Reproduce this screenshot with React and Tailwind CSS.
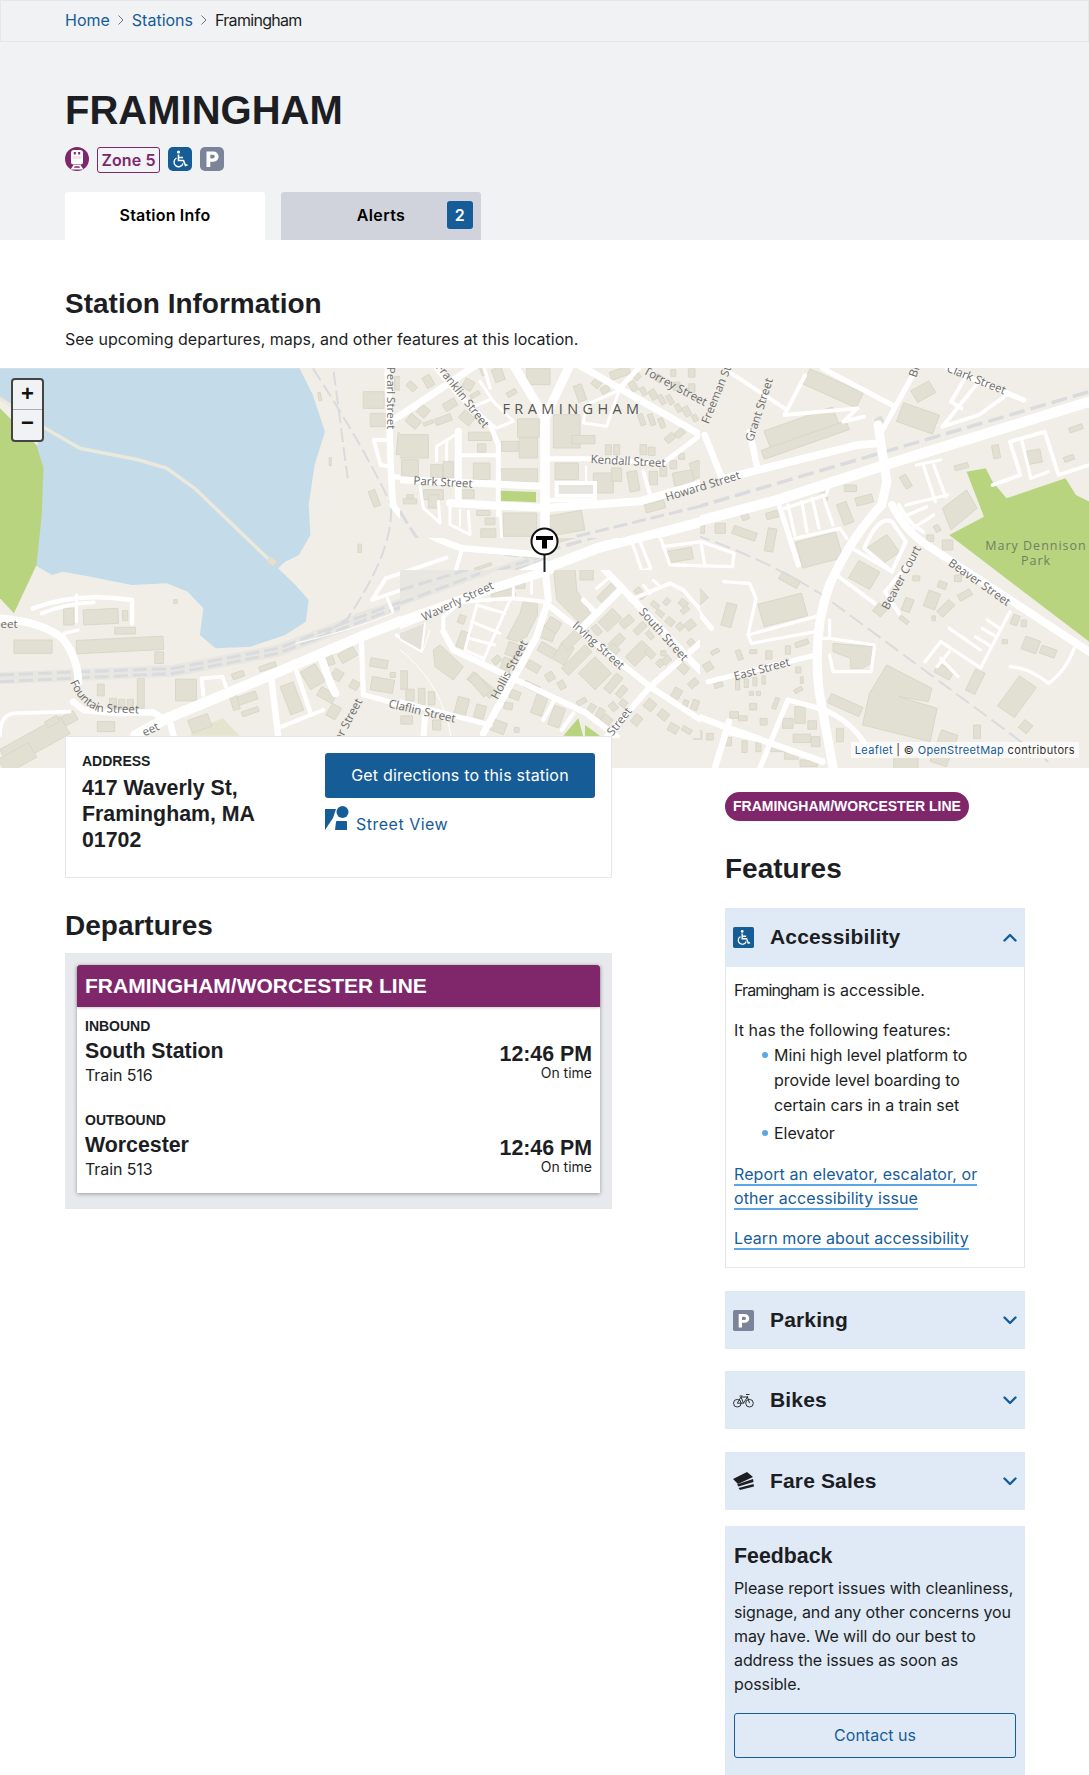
import React from "react";

const INTER = "font-['Inter',sans-serif]";
const ARIAL = "font-['Liberation_Sans',Arial,sans-serif]";

const water2 = "M0 10 L862 10 L900 90 L935 200 L905 300 L888 420 L893 510 L860 570 L820 590 L800 610 L850 660 L888 705 L880 770 L820 810 L720 845 L620 850 L575 810 L585 730 L540 680 L480 655 L380 660 L260 635 L180 620 L150 630 L100 600 L108 450 L105 250 L120 190 L0 100 Z";
const green2 = ["M0 130 L105 240 L125 310 L120 450 L105 600 L40 745 L0 700 Z"];
const green3 = ["M1215 320 L1270 310 L1290 350 L1330 400 L1500 340 L1530 390 L1568 410 L1568 830 L1165 510 L1265 455 Z"];

const b2 = [[1075,105,60,50,0],[1090,165,50,40,0],[1190,240,95,65,5],[1180,310,45,50,0],[1385,320,50,50,0],[1490,190,60,80,0],[1510,280,90,130,0],[1465,250,50,30,0],[1260,320,30,50,0],[1290,310,30,50,0],[1385,250,20,25,0],[1185,170,40,30,30],[1220,140,30,20,50],[1270,160,50,25,-20],[1150,55,30,40,0],[1185,90,30,15,-30],[1230,50,20,40,-20],[1300,120,35,30,40],[1330,165,25,30,40],[1360,215,60,25,0],[1380,90,30,15,0],[1250,385,50,30,0],[1345,385,50,20,0],[1180,385,40,25,10],[1410,445,40,20,0],[1410,468,30,15,0],[1410,500,45,30,0],[1495,480,90,70,0],[1077,400,20,50,-20],[1035,550,10,25,0],[950,290,6,25,0],[782,590,25,20,40],[198,755,30,50,0],[290,755,100,45,-3],[360,752,15,30,0],[360,797,60,20,0],[345,840,250,40,-3],[95,845,110,40,0],[458,878,25,35,0],[405,985,20,90,0],[290,975,20,35,0],[325,1015,20,30,0],[350,1018,18,30,0],[375,1018,18,30,0],[535,975,60,65,0],[685,930,35,18,-20],[770,905,50,15,-20],[100,1130,200,60,-30],[150,1070,40,20,-30],[200,1060,40,30,-30],[50,1180,100,50,-30],[305,1085,50,30,0],[710,1000,60,25,-20],[720,1040,50,15,-20],[675,1010,20,50,-15],[575,1075,60,40,-20],[900,935,50,60,-30],[840,1000,40,90,-20],[950,885,20,30,-20],[1000,870,50,30,-30],[970,930,30,30,30],[940,990,50,30,30],[1020,960,25,25,30],[960,1040,30,40,30],[1090,895,50,25,10],[1100,960,65,40,10],[1130,930,15,15,0],[1160,945,15,45,0],[1045,745,50,8,-20],[1390,605,50,8,-20],[1425,630,70,14,-20],[1180,720,50,8,-20],[975,800,50,8,-20],[505,710,10,12,0],[920,95,8,25,-10]];

const b3 = [[60,500,110,50,-15],[1090,80,60,40,-30],[830,70,170,50,25],[740,190,210,60,-20],[750,225,260,28,-20],[965,170,20,25,-30],[1075,160,110,60,20],[880,370,35,20,0],[920,405,50,25,-15],[865,445,30,65,-20],[805,395,15,25,-15],[575,450,20,30,-20],[505,490,30,30,0],[445,490,30,30,0],[575,505,70,25,20],[650,525,25,70,10],[655,450,35,20,-15],[1300,260,20,40,-10],[1200,305,40,15,-15],[1410,275,40,40,-10],[1530,190,40,15,-20],[1510,280,30,15,-20],[1040,350,20,40,-30],[1130,490,15,20,-30],[1110,520,20,20,0],[1160,540,30,30,0],[390,570,70,35,-10],[975,555,70,65,-35],[920,630,70,60,30],[790,555,120,80,-15],[685,735,130,70,-15],[705,645,60,25,30],[530,750,30,70,15],[440,685,60,30,50],[1155,730,50,25,-45],[1115,705,35,50,20],[1045,720,25,40,20],[1210,690,40,20,-30],[1145,660,25,20,20],[1190,640,20,20,0],[1070,640,20,15,0],[965,735,30,30,40],[1035,765,30,12,40],[1120,760,10,15,0],[1325,830,15,12,0],[1400,840,45,40,20],[1450,860,45,25,20],[1355,765,20,30,20],[1380,775,15,20,0],[1240,950,30,70,25],[1360,995,60,110,35],[1385,1085,30,30,40],[1245,1100,20,40,0],[1150,920,50,30,30],[865,1020,100,30,25],[1150,1150,50,100,20],[1040,1195,70,40,0],[560,870,15,30,-20],[600,860,20,12,0],[645,870,18,25,0],[700,855,15,25,0],[740,835,40,15,-20],[555,960,12,30,0],[580,955,12,25,0],[605,950,12,25,0],[630,945,10,25,0],[490,860,25,12,-30],[470,905,25,25,-30],[500,960,25,15,-20],[730,915,15,18,0],[740,945,8,20,0],[730,975,25,12,-30],[595,985,12,12,0],[615,985,12,12,0],[665,1015,12,35,20],[545,1050,25,20,0],[570,1060,25,15,0],[600,1025,20,20,0],[630,1070,20,20,0],[700,1075,30,30,0],[735,1050,30,50,0],[770,1080,25,25,0],[740,1120,50,25,0],[780,1130,25,30,0],[670,1150,40,20,0],[710,1170,40,25,0],[760,1195,50,20,0],[850,1110,20,40,0],[525,1130,25,25,0],[575,1145,15,35,0],[615,1145,15,30,0],[440,1110,25,25,0],[475,1115,20,20,0]];

const poly3 = ["M1145 430 L1215 375 L1245 430 L1170 495 Z","M985 900 L1115 970 L1105 1010 L1020 995 L1130 1030 L1110 1130 L915 1080 L935 985 Z","M830 835 L945 845 L940 895 L915 910 L880 910 L880 880 L830 860 Z"];

const rail2 = ["M0 930 L500 910 L800 850 L1100 730 L1568 570","M0 950 L500 925 L800 865 L1100 745 L1568 585","M900 10 Q1050 250 1130 430 Q1220 560 1568 580","M1125 430 Q1130 560 1000 760 L900 830","M960 20 L1000 340"];
const rail3 = [["M0 560 L1568 80",3.5],["M370 490 Q600 560 800 690 L1450 1190",2]];

const roads2 = [
[8,"M390 1110 L480 1060 L780 930 L1050 810 L1568 600"],[6,"M0 760 Q120 770 180 820 Q225 880 225 950"],[5,"M210 1010 L240 1035 L340 1045 L440 1042 L490 1075 L500 1115"],[5,"M1115 10 L1125 330 L1130 420 Q1180 500 1330 550 L1568 570"],[4,"M1125 335 L1420 358"],[5,"M1340 20 L1130 165"],[3,"M1125 225 L1075 225 L1095 300 L1125 305"],[3,"M1285 578 L1110 640 L1070 705 L1310 620 L1330 550"],[2.5,"M1195 620 L1205 645"],[2.5,"M1115 700 L1130 740"],[3.5,"M95 730 Q220 680 380 705 L380 775"],[3,"M120 745 Q190 715 270 712"],[2.5,"M220 690 L220 770"],[2.5,"M185 805 L225 795"],[3,"M650 965 L640 935 L580 940 L585 990"],[5,"M780 935 L800 1110"],[3.5,"M850 910 L895 1050"],[3,"M810 1085 L930 1035"],[6,"M925 880 Q950 960 965 985"],[4,"M1040 830 L1045 990"],[4,"M1050 990 L1220 1040"],[3,"M0 1110 Q0 1050 40 1045 L200 1040"],[1,"M850 835 Q1000 800 1130 745"],[2.5,"M1140 810 L1190 850 L1225 790"]
];

const roads3 = [
[8,"M0 610 L150 550 L670 405 L980 300 L1568 110"],[6,"M520 340 L900 240 L960 235"],[7,"M960 180 L985 350 L970 420 Q880 520 820 660 Q770 800 790 980 L830 1208"],[4,"M1060 30 L970 200"],[6,"M1000 420 Q1040 500 1100 540 L1568 860"],[4,"M480 790 L370 650 L340 670"],[4,"M470 950 L780 870"],[5,"M510 340 L460 210"],[3,"M530 20 L690 130"],[3,"M750 30 L690 150 L900 130 L860 170 L920 155"],[4,"M800 10 L1000 120"],[5,"M590 200 L610 300"],[4,"M1160 10 L1380 105"],[3,"M1210 40 L1170 110 L1200 130"],[3,"M1250 50 L1145 185"],[3,"M1330 90 L1250 150 L1145 185"],[3,"M1290 360 L1370 330 L1340 230 L1440 200 L1480 330 L1568 300"],[2.5,"M1375 230 L1400 340 L1450 320"],[2.5,"M1070 300 L1140 285"],[2.5,"M1090 300 L1125 410"],[2.5,"M1120 300 L1155 395"],[2.5,"M1040 420 L1160 390"],[2.5,"M1045 450 L1100 425"],[2.5,"M1060 490 L1120 450"],[3,"M1020 420 Q1050 480 1090 500"],[4,"M670 405 L730 600"],[2.5,"M690 430 L810 390"],[2.5,"M700 420 L720 510"],[2.5,"M740 410 L755 500"],[2.5,"M770 400 L790 490"],[2.5,"M800 390 L830 480"],[2.5,"M720 520 L850 490 L870 520"],[2.5,"M820 360 L810 390"],[3,"M1000 470 Q960 450 920 550 L1000 620 L1040 530 Z"],[3,"M885 550 L1000 620"],[3,"M840 630 L950 715"],[3,"M1060 580 L980 680 L1020 745"],[2.5,"M515 650 L590 655 L608 700 L585 810 L595 835 L780 800"],[2.5,"M585 810 L780 755"],[2.5,"M820 765 L820 820 L950 840 L940 920 L830 920 L820 870"],[2.5,"M780 820 L820 820"],[2.5,"M330 510 L360 600 L540 605 L545 565 L450 530 L340 545"],[2.5,"M450 535 L460 600"],[2.5,"M250 530 L280 620 L305 610 L270 520"],[2.5,"M1165 790 L1255 855"],[2.5,"M1140 830 L1250 905"],[2.5,"M1095 890 L1140 830"],[2.5,"M1130 905 L1165 860"],[2.5,"M1190 935 L1140 880"],[2.5,"M1255 910 L1340 740"],[2.5,"M1275 765 L1310 790"],[2.5,"M1260 790 L1300 815"],[2.5,"M1240 815 L1280 840"],[2.5,"M1340 905 Q1400 910 1450 955 Q1500 920 1525 850"],[4,"M620 1208 L700 1005 L790 1030 Q880 1060 930 1150"],[4,"M640 1130 L520 1100"],[5,"M300 1000 L530 1090 L800 1190"],[5,"M530 1070 L510 1140 L490 1208"]
];

const tB = [[40,235,90,70,0],[30,300,50,50,0],[110,310,35,40,0],[145,305,30,50,0],[245,240,25,25,0],[245,310,50,50,0],[240,205,70,25,0],[355,325,115,45,0],[330,235,50,30,0],[385,240,55,60,0],[385,180,65,55,0],[500,310,70,50,0],[610,345,60,60,0],[650,320,30,40,0],[700,340,30,60,-10],[760,330,25,40,0],[850,330,60,40,-10],[890,305,30,50,-20],[790,310,20,30,0],[820,290,20,25,0],[500,190,80,100,0],[550,215,70,25,0],[625,245,18,30,0],[650,245,18,30,0],[730,245,20,30,0],[755,250,20,25,0],[765,415,60,25,-15],[250,435,40,15,0],[270,460,30,20,0],[265,495,45,25,0],[360,470,100,70,0],[500,465,100,60,-10],[195,378,55,25,0],[100,380,60,30,0],[100,400,30,40,0],[30,400,40,15,0],[30,385,20,10,0],[35,55,20,30,-45],[40,160,40,30,40],[70,130,30,30,40],[85,40,25,35,-30],[130,155,50,20,-20],[85,165,30,10,-20],[205,50,30,30,30],[225,80,30,12,-30],[200,150,40,30,40],[150,110,40,25,-30],[250,10,15,25,-20],[415,25,70,50,0],[295,20,30,40,-20],[335,75,30,15,-30],[590,45,25,25,40],[615,65,25,20,-30],[540,75,25,50,-20],[660,15,60,25,-20],[700,55,20,30,-30],[730,70,15,25,-30],[760,80,20,30,-30],[785,95,15,30,-30],[810,95,15,30,-30],[835,120,15,25,-30],[860,130,20,30,-30],[885,150,15,20,-30],[725,155,15,35,-20],[755,155,15,35,-20],[785,165,15,30,-20],[810,210,30,20,-40],[840,195,30,20,-40],[845,265,18,18,0],[710,25,20,20,40],[775,30,20,20,40],[830,55,20,25,0],[875,60,20,25,0],[875,15,20,25,0],[820,15,15,20,0]];
const tR = [[9.5,"M435 520 L435 150"],[9,"M435 150 L340 -10"],[9,"M435 150 L510 -10"],[7,"M-10 150 L230 -10"],[5,"M100 -10 L175 80 L270 170 L295 230 L295 440"],[7,"M175 190 L175 400"],[3,"M110 280 L110 235 L175 195"],[3,"M140 220 L140 275"],[4,"M185 262 L290 262"],[7,"M-10 335 L435 355"],[8,"M150 405 L435 420 L720 400 L910 345"],[5,"M450 272 L570 272 L790 285 L910 195"],[3,"M60 355 L70 420 L120 465 L115 400"],[3,"M150 410 L150 470 L210 500 L205 430"],[2,"M180 425 L180 475"],[2.5,"M300 420 L305 510"],[3,"M240 40 L280 100 L340 160 L290 180 L210 120 L270 95"],[3.5,"M250 -10 L270 60"],[7,"M535 -10 L910 205"],[5,"M660 60 L725 -10"],[3,"M660 60 L620 175 L550 165 L560 110 L650 70"],[2,"M558 295 L558 345"],[4,"M450 397 L585 397"],[2.5,"M585 345 L585 400"],[4,"M730 310 L750 380"],[10,"M590 545 L910 460"]];

const bB = [[185,148,20,25,20],[190,210,30,50,20],[340,240,40,40,20],[290,270,25,20,-40],[320,285,30,40,20],[245,345,90,30,40],[240,345,30,70,-40],[345,375,30,25,20],[395,350,50,20,25],[295,470,45,35,20],[325,408,25,20,10],[350,480,15,15,0],[185,410,35,55,15],[240,425,30,40,15],[418,405,35,60,20],[470,440,35,60,20],[445,190,40,40,20],[460,165,40,35,30],[440,240,50,30,30],[490,250,40,60,30],[515,210,60,30,-45],[530,270,100,30,-45],[585,310,70,70,-45],[640,340,60,25,-50],[400,290,40,25,30],[450,320,25,25,-30],[485,345,20,25,-30],[630,150,60,40,-45],[680,155,40,25,-40],[590,180,20,30,-40],[650,215,50,25,-45],[640,240,30,30,-45],[715,250,70,40,-45],[750,250,20,30,-45],[780,280,20,20,-45],[720,175,40,20,-45],[750,195,15,25,-40],[790,250,15,15,0],[560,15,40,30,0],[620,70,60,25,-45],[720,70,35,20,50],[310,75,70,25,-15],[360,45,30,20,0],[765,105,25,15,40],[800,95,15,20,40],[850,100,25,20,40],[855,120,25,15,-40],[780,130,25,15,40],[810,155,25,20,40],[840,170,20,20,-40],[870,165,30,25,-40],[875,220,20,25,-40],[800,270,25,20,-40],[850,295,30,25,40],[880,340,30,20,-40],[830,370,25,30,30],[750,405,30,30,40],[790,435,30,25,40],[820,475,30,25,30],[860,480,30,15,30],[885,405,20,30,20],[855,405,15,30,20],[670,400,20,20,40],[640,410,20,25,-40],[665,365,35,20,-50],[600,430,20,30,30],[575,415,20,25,30],[545,395,30,15,-30],[620,450,30,25,40],[710,450,25,30,40],[10,330,25,55,0],[30,375,25,35,0],[65,380,20,50,0],[95,385,20,40,0],[110,465,25,30,0],[20,450,35,25,0]];
const bP = ["M100 240 L120 225 L190 290 L160 330 L105 290 Z","M370 95 L412 95 L412 135 L380 200 L350 215 L320 205 L360 130 Z","M460 -5 L525 -5 L530 60 L570 130 L540 160 L470 90 Z"];
const bR = [[9,"M-10 158 L280 55 L450 0"],[7,"M435 -5 L445 90 L410 200 L250 490"],[6,"M445 105 L750 350 L910 455"],[6,"M130 185 L160 240 L560 430 L650 500"],[4,"M130 185 L130 140 L180 95 L340 85 L435 95"],[3,"M230 105 L315 130"],[3,"M215 155 L300 190"],[3,"M207 205 L285 225"],[3,"M195 240 L250 265"],[3,"M330 90 L250 270"],[3,"M230 105 L195 240"],[7,"M610 -5 L880 280 L910 310"],[6,"M910 210 L750 350 L620 500"],[7,"M660 60 L550 170"],[5,"M550 90 L580 120"],[3,"M590 55 L625 25"],[3,"M730 45 L750 70"],[3,"M760 30 L780 50"],[4,"M690 90 L810 40 L850 60 L910 130"],[5,"M-10 393 L270 465"],[6,"M75 440 L70 510"],[3,"M395 35 L395 70"],[3,"M340 50 L340 85"],[4,"M460 395 L430 450"],[4,"M520 430 L485 480"],[1,"M-5 235 Q130 340 155 510"],[1,"M90 180 L70 240"],[2,"M-5 205 L65 245 L75 160"],[3,"M-5 175 L85 140"]];

const labels = [
["Pearl Street",390,30,90],["Franklin Street",462,28,52],["Kendall Street",628,94,3],["Park Street",443,115,3],["Howard Street",703,119,-17],["Torrey Street",675,19,28],["Freeman St",717,27,-68],["Grant Street",760,42,-72],["Bi",915,4,-70],["Clark Street",976,12,22],["Waverly Street",458,234,-25],["Irving Street",598,278,42],["South Street",663,267,48],["Hollis Street",510,302,-62],["Street",620,354,-52],["East Street",762,302,-15],["Beaver Court",902,210,-62],["Beaver Street",979,215,35],["Claflin Street",422,344,13],["eet",9,257,0],["ar Street",349,352,-62],["eet",151,362,-25]
];

const Bldg = ({ d }) => d.map(([x, y, w, h, a], i) => (
  <rect key={i} x={x - w / 2} y={y - h / 2} width={w} height={h} fill="#e2dfd3" stroke="#dad7ca" strokeWidth="1" vectorEffect="non-scaling-stroke" transform={`rotate(${a} ${x} ${y})`} />
));
const Rd = ({ d, k = 1.3 }) => d.map(([w, p], i) => (
  <path key={i} d={p} fill="none" stroke="#ffffff" strokeWidth={w * (w > 1 ? k : 1)} strokeLinecap="round" strokeLinejoin="round" vectorEffect="non-scaling-stroke" />
));

const MapArt = () => (
  <svg viewBox="0 0 1089 400" className="block w-full h-full" xmlns="http://www.w3.org/2000/svg">
    <defs>
      <clipPath id="clipTop"><rect x="400" y="0" width="300" height="170" /></clipPath>
      <clipPath id="clipBot"><rect x="400" y="202" width="300" height="168" /></clipPath>
    </defs>
    <rect width="1089" height="400" fill="#f0eee7" />
    <g transform="scale(0.3476 0.33333) translate(0 -9)">
      <path d={water2} fill="#c4dbe9" />
      <path d="M0 100 L130 190 L230 250 L400 285 L480 310 L560 370 L790 600" fill="none" stroke="#ebe8dc" strokeWidth="3.5" vectorEffect="non-scaling-stroke" />
      {green2.map((d, i) => <path key={i} d={d} fill="#b9d47e" />)}
      <path d="M550 1100 L640 1060 L690 1112 L550 1112 Z" fill="#e3e5cf" />
      <Bldg d={b2} />
      <path d="M0 940 L500 917 L800 857 L1100 737 L1568 577" fill="none" stroke="#e8e7e2" strokeWidth="12" vectorEffect="non-scaling-stroke" />
      {rail2.map((d, i) => <path key={i} d={d} fill="none" stroke="#d9dbde" strokeWidth={i < 2 ? 3 : 2} strokeDasharray="14 5" vectorEffect="non-scaling-stroke" />)}
      <Rd d={roads2} />
    </g>
    <g transform="translate(545 0) scale(0.347 0.33333) translate(0 -9)">
      {green3.map((d, i) => <path key={i} d={d} fill="#b9d47e" />)}
      {poly3.map((d, i) => <path key={i} d={d} fill="#e2dfd3" stroke="#dad7ca" vectorEffect="non-scaling-stroke" />)}
      <Bldg d={b3} />
      {rail3.map(([d, w], i) => <path key={i} d={d} fill="none" stroke="#d9dbde" strokeWidth={w} strokeDasharray="16 6" vectorEffect="non-scaling-stroke" />)}
      <Rd d={roads3} />
    </g>
    <g clipPath="url(#clipTop)">
      <rect x="400" y="0" width="300" height="170" fill="#f0eee7" />
      <g transform="translate(400 0) scale(0.33333)">
        <Bldg d={tB} />
        <path d="M300 368 L408 372 L408 403 L300 398 Z" fill="#b9d47e" />
        <rect x="470" y="345" width="115" height="38" fill="#e6e5df" stroke="#ffffff" strokeWidth="4" vectorEffect="non-scaling-stroke" />
        <Rd d={tR} k={1} />
        <path d="M0 430 Q30 480 55 515 M530 505 L900 415" fill="none" stroke="#d9dbde" strokeWidth="3" strokeDasharray="14 5" vectorEffect="non-scaling-stroke" />
      </g>
    </g>
    <g clipPath="url(#clipBot)">
      <rect x="400" y="202" width="300" height="168" fill="#f0eee7" />
      <g transform="translate(400 202) scale(0.33333)">
        <path d="M0 0 L300 0 L0 110 Z" fill="#e8e7e2" />
        <path d="M0 60 L300 -30 M0 100 L240 10" fill="none" stroke="#d9dbde" strokeWidth="3" strokeDasharray="14 5" vectorEffect="non-scaling-stroke" />
        <path d="M0 205 L65 245 L75 160 L0 190 Z" fill="#e2e0d8" />
        <path d="M490 497 L535 445 L550 500 Z M555 465 L600 497 L555 500 Z" fill="#b9d47e" />
        {bP.map((d, i) => <path key={i} d={d} fill="#e2dfd3" stroke="#dad7ca" vectorEffect="non-scaling-stroke" />)}
        <Bldg d={bB} />
        <Rd d={bR} k={1} />
      </g>
    </g>
    <g fontFamily="'Open Sans',sans-serif" fontSize="11.5" fill="#6b6b6b" textAnchor="middle">
      {labels.map(([t, x, y, a], i) => (
        <text key={i} x={x} y={y} dominantBaseline="middle" transform={`rotate(${a} ${x} ${y})`}>{t}</text>
      ))}
      <path id="fountainpath" d="M70 314 Q80 338 100 344 L150 346" fill="none" />
      <text textAnchor="start"><textPath href="#fountainpath">Fountain Street</textPath></text>
      <text x="573" y="46" fontSize="14.5" letterSpacing="4.4" fill="#555555">FRAMINGHAM</text>
      <text x="1036" y="182" fontSize="12.5" letterSpacing="1" fill="#718064">Mary Dennison</text>
      <text x="1036" y="197" fontSize="12.5" letterSpacing="1" fill="#718064">Park</text>
    </g>
    <g transform="translate(544.5 173.5)">
      <line x1="0" y1="10" x2="0" y2="30.5" stroke="#1c1e23" strokeWidth="2" />
      <circle cx="0" cy="0" r="13" fill="#fff" stroke="#111" strokeWidth="2" />
      <path d="M-8.5 -5.5 H8.5 V-1.5 H2.5 V7 H-2.5 V-1.5 H-8.5 Z" fill="#000" />
    </g>
  </svg>
);

const Wheelchair = ({ size = 24, r = 5 }) => (
  <svg width={size} height={size} viewBox="0 0 24 24" className="shrink-0">
    <rect width="24" height="24" rx={r} fill="#165c96" />
    <circle cx="10.5" cy="5" r="1.6" fill="#fff" />
    <path d="M10.5 7.5 V13.5 H15.5 L17.5 18.5 L19.5 17.8 M10.5 10.5 H15" fill="none" stroke="#fff" strokeWidth="1.6" />
    <path d="M8.5 11 A4.6 4.6 0 1 0 15 16.5" fill="none" stroke="#fff" strokeWidth="1.4" />
  </svg>
);
const ParkIcon = ({ size = 24, r = 5 }) => (
  <svg width={size} height={size} viewBox="0 0 24 24" className="shrink-0">
    <rect width="24" height="24" rx={r} fill="#7b8499" />
    <path fillRule="evenodd" d="M6.5 4.5 H13.5 A5 5 0 0 1 13.5 14.7 H10.3 V20 H6.5 Z M10.3 7.8 V11.4 H13 A1.8 1.8 0 0 0 13 7.8 Z" fill="#fff" />
  </svg>
);
const TrainIcon = () => (
  <svg width="24" height="24" viewBox="0 0 24 24" className="shrink-0">
    <circle cx="12" cy="12" r="12" fill="#80276c" />
    <path d="M6 6 Q6 3 9 3 H15 Q18 3 18 6 V15 Q18 17.5 15.5 17.5 H8.5 Q6 17.5 6 15 Z" fill="#fff" />
    <rect x="8.8" y="5" width="2" height="2.5" fill="#80276c" />
    <rect x="13.2" y="5" width="2" height="2.5" fill="#80276c" />
    <rect x="7.5" y="9" width="9" height="3" fill="#f0e4ec" />
    <path d="M8.5 18 L5.5 22.5 H18.5 L15.5 18 Z M9.8 19.2 L8.9 20.8 H15.1 L14.2 19.2 Z" fill="#fff" fillRule="evenodd" />
  </svg>
);
const Bike = () => (
  <svg width="21" height="15" viewBox="0 0 21 15" className="shrink-0" fill="none" stroke="#1c1e23" strokeWidth="0.9">
    <circle cx="4.3" cy="10.2" r="3.8" />
    <circle cx="16.5" cy="10.2" r="3.8" />
    <path d="M4.3 10.2 L8 4 H14.5 L16.5 10.2 M8 4 L10.5 10.2 H4.3 M10.5 10.2 L14.5 4 M14.2 3 L14.5 4 M13 1.5 H16.5 M6.5 3 H9.5" />
  </svg>
);
const Fare = () => (
  <svg width="21" height="20" viewBox="0 0 21 20" className="shrink-0" fill="#1c1e23">
    <path d="M0 8 L14 1 L20 6 L5 13 Z" />
    <path d="M4 13.5 L20 8 L20.5 11 L5.5 15.5 Z" />
    <path d="M5.5 17 L20.5 13 L21 15.5 L7 19 Z" />
  </svg>
);
const Chevron = ({ up }) => (
  <svg width="14" height="9" viewBox="0 0 14 9" className="shrink-0" fill="none" stroke="#165c96" strokeWidth="2.4" strokeLinecap="round" strokeLinejoin="round">
    <path d={up ? "M1.5 7.5 L7 2 L12.5 7.5" : "M1.5 1.5 L7 7 L12.5 1.5"} />
  </svg>
);
const StreetIcon = () => (
  <svg width="24" height="24" viewBox="0 0 24 24" className="shrink-0" fill="#165c96">
    <path d="M0 3 H11 L8 12 L0 24 Z" />
    <circle cx="17.5" cy="6" r="6" />
    <path d="M11 16 Q11 15 12 15 H21 Q22 15 22 16 V24 H10 Z" />
  </svg>
);

const FeatureHeader = ({ icon, title, up, className = "" }) => (
  <div className={`flex items-center bg-[#e0eaf6] pl-2 pr-[7px] ${up ? "h-[59px]" : "h-[58px]"} ${className}`}>
    <div className="w-[21px] flex justify-center">{icon}</div>
    <div className={`ml-4 flex-1 ${ARIAL} font-bold text-[21px] tracking-[0.15px] text-[#1c1e23] ${up ? "pb-[2px]" : ""}`}>{title}</div>
    <div className="mr-[1px]"><Chevron up={up} /></div>
  </div>
);

const Dep = ({ dir, dest, train, className = "" }) => (
  <div className={`px-2 ${className}`}>
    <div className={`${ARIAL} font-bold text-[14px] leading-[16px] text-[#1c1e23]`}>{dir}</div>
    <div className="flex justify-between">
      <div>
        <div className={`${ARIAL} font-bold text-[21.33px] leading-[26px] mt-[4px] text-[#1c1e23]`}>{dest}</div>
        <div className="text-[16px] leading-[22px] text-[#1c1e23] tracking-[-0.1px]">{train}</div>
      </div>
      <div className="text-right">
        <div className={`${ARIAL} font-bold text-[21.33px] leading-[26px] mt-[7px] text-[#1c1e23]`}>12:46 PM</div>
        <div className="text-[14px] leading-[16px] -mt-[2px] text-[#1c1e23]">On time</div>
      </div>
    </div>
  </div>
);

const UL = "text-[#165c96] border-b-2 border-[#5ba7e5]";

export default function App() {
  return (
    <div className={`relative w-[1089px] h-[1775px] overflow-hidden bg-white ${INTER} text-[16px] text-[#1c1e23]`}>
      <header className="bg-[#f1f2f4] h-[240px]">
        <div className="h-[42px] border border-[#e5e7eb] flex items-center pl-[64px] pb-[2px]">
          <span className="text-[#165c96]">Home</span>
          <svg width="8" height="12" viewBox="0 0 8 12" className="mx-[7px]" fill="none" stroke="#6b7280" strokeWidth="1"><path d="M1.5 1.5 L6 6 L1.5 10.5" /></svg>
          <span className="text-[#165c96]">Stations</span>
          <svg width="8" height="12" viewBox="0 0 8 12" className="mx-[7px]" fill="none" stroke="#6b7280" strokeWidth="1"><path d="M1.5 1.5 L6 6 L1.5 10.5" /></svg>
          <span className="tracking-[-0.7px]">Framingham</span>
        </div>
        <div className="pl-[65px]">
          <h1 className={`${ARIAL} font-bold text-[40px] leading-[48px] mt-[44px] text-[#1c1e23]`}>FRAMINGHAM</h1>
          <div className="flex items-start gap-2 mt-[13px] h-[26px]">
            <TrainIcon />
            <div className="h-[26px] w-[63px] border border-[#80276c] rounded-[3px] bg-white/10 text-[#80276c] font-semibold text-[16px] tracking-[0.1px] flex items-center justify-center pb-[1px]">Zone 5</div>
            <Wheelchair />
            <ParkIcon />
          </div>
          <div className="flex gap-4 mt-[19px]">
            <div className="w-[200px] h-[48px] bg-white rounded-t-[3px] flex items-center justify-center font-semibold text-black tracking-[0.2px] pb-[2px]">Station Info</div>
            <div className="relative w-[200px] h-[48px] bg-[#d0d3db] rounded-t-[3px] flex items-center justify-center font-semibold text-black tracking-[0.4px] pb-[2px]">
              Alerts
              <span className="absolute right-[8px] top-[9px] w-[26px] h-[28px] rounded-[3px] bg-[#165c96] text-white flex items-center justify-center">2</span>
            </div>
          </div>
        </div>
      </header>

      <section className="px-[65px] pt-[48px]">
        <h2 className={`${ARIAL} font-bold text-[28px] leading-[32px] text-[#1c1e23]`}>Station Information</h2>
        <p className="mt-[7px] leading-[24px]">See upcoming departures, maps, and other features at this location.</p>
      </section>

      <div className="relative h-[400px] mt-[17px] overflow-hidden">
        <MapArt />
        <div className={`absolute left-[11px] top-[10px] w-[33px] h-[64px] border-2 border-[#444] rounded-[4px] bg-[#f1f2f4] text-[#111] ${ARIAL} font-bold text-[22px]`}>
          <div className="h-[30px] flex items-center justify-center border-b border-[#a9adb6] pb-[3px]">+</div>
          <div className="h-[30px] flex items-center justify-center pb-[5px]">−</div>
        </div>
        <div className="absolute right-[10px] bottom-[10px] h-[16px] px-[4px] bg-white/70 text-[11px] leading-[16px] text-[#333] tracking-[0.35px]">
          <span className="text-[#165c96]">Leaflet</span> | © <span className="text-[#165c96]">OpenStreetMap</span> contributors
        </div>
      </div>

      <div className="flex items-start px-[65px]">
        <div className="w-[547px] shrink-0 -mt-[32px] relative">
          <div className="bg-white border border-[#e5e7eb] h-[142px] flex pl-4 pt-4">
            <div className="w-[243px]">
              <div className={`${ARIAL} font-bold text-[14px] leading-[16px] text-[#1c1e23]`}>ADDRESS</div>
              <div className={`${ARIAL} font-bold text-[21.33px] leading-[26px] mt-[6px] text-[#1c1e23]`}>417 Waverly St,<br />Framingham, MA<br />01702</div>
            </div>
            <div className="w-[270px]">
              <div className="h-[45px] bg-[#165c96] rounded-[3px] text-white tracking-[0.2px] flex items-center justify-center pb-[2px]">Get directions to this station</div>
              <div className="flex items-start mt-[8px]">
                <StreetIcon />
                <span className="text-[#165c96] ml-[7px] mt-[6px] leading-[24px] tracking-[0.5px]">Street View</span>
              </div>
            </div>
          </div>
          <h2 className={`${ARIAL} font-bold text-[28px] leading-[32px] mt-[32px] text-[#1c1e23]`}>Departures</h2>
          <div className="bg-[#e8e9ed] h-[256px] mt-[11px] p-3">
            <div className="bg-white h-[228px] shadow-[0_1px_4px_rgba(0,0,0,0.35)]">
              <div className={`h-[42px] bg-[#80276c] rounded-t-[3px] text-white ${ARIAL} font-bold text-[21px] flex items-center px-2 shadow-[0_1px_3px_rgba(0,0,0,0.2)]`}>FRAMINGHAM/WORCESTER LINE</div>
              <Dep dir="INBOUND" dest="South Station" train="Train 516" className="pt-[11px]" />
              <Dep dir="OUTBOUND" dest="Worcester" train="Train 513" className="pt-[26px]" />
            </div>
          </div>
        </div>

        <aside className="w-[300px] ml-[113px] shrink-0 pt-6">
          <div className={`inline-flex h-[29px] items-center px-2 rounded-full bg-[#80276c] text-white ${ARIAL} font-bold text-[14px]`}>FRAMINGHAM/WORCESTER LINE</div>
          <h2 className={`${ARIAL} font-bold text-[28px] leading-[32px] mt-[32px] text-[#1c1e23]`}>Features</h2>
          <div className="mt-[23px]">
            <FeatureHeader icon={<Wheelchair size={21} r={2} />} title="Accessibility" up />
            <div className="border border-t-0 border-[#e5e7eb] h-[301px] px-2 pt-[11px] leading-[24px]">
              <p><span className="tracking-[-0.9px]">Framingham</span> is accessible.</p>
              <p className="mt-[16px] tracking-[0.1px]">It has the following features:</p>
              <ul className="ml-[28px] mt-[1px] tracking-[-0.05px]">
                <li className="relative pl-[12px] w-[225px] leading-[25px]"><span className="absolute left-0 top-[9px] w-[6px] h-[6px] rounded-full bg-[#5ba7e5]"></span>Mini high level platform to provide level boarding to certain cars in a train set</li>
                <li className="relative pl-[12px] mt-[3px]"><span className="absolute left-0 top-[9px] w-[6px] h-[6px] rounded-full bg-[#5ba7e5]"></span>Elevator</li>
              </ul>
              <p className="mt-[17px] tracking-[0.1px]"><span className={UL}>Report an elevator, escalator, or</span><br /><span className={UL}>other accessibility issue</span></p>
              <p className="mt-[16px] tracking-[0.1px]"><span className={UL}>Learn more about accessibility</span></p>
            </div>
            <FeatureHeader className="mt-[23px]" icon={<ParkIcon size={21} r={2} />} title="Parking" />
            <FeatureHeader className="mt-[22px]" icon={<Bike />} title="Bikes" />
            <FeatureHeader className="mt-[23px]" icon={<Fare />} title="Fare Sales" />
            <div className="mt-[16px] bg-[#e0eaf6] h-[260px] pl-[9px] pr-2 pt-[16px]">
              <h3 className={`${ARIAL} font-bold text-[21.33px] leading-[28px] text-[#1c1e23]`}>Feedback</h3>
              <p className="leading-[24px] mt-[6px] tracking-[-0.1px]">Please report issues with cleanliness, signage, and any other concerns you may have. We will do our best to address the issues as soon as possible.</p>
              <div className="mt-[17px] w-[282px] h-[45px] border-[1.5px] border-[#165c96] rounded-[3px] text-[#165c96] flex items-center justify-center pb-[1px]">Contact us</div>
            </div>
          </div>
        </aside>
      </div>
    </div>
  );
}
